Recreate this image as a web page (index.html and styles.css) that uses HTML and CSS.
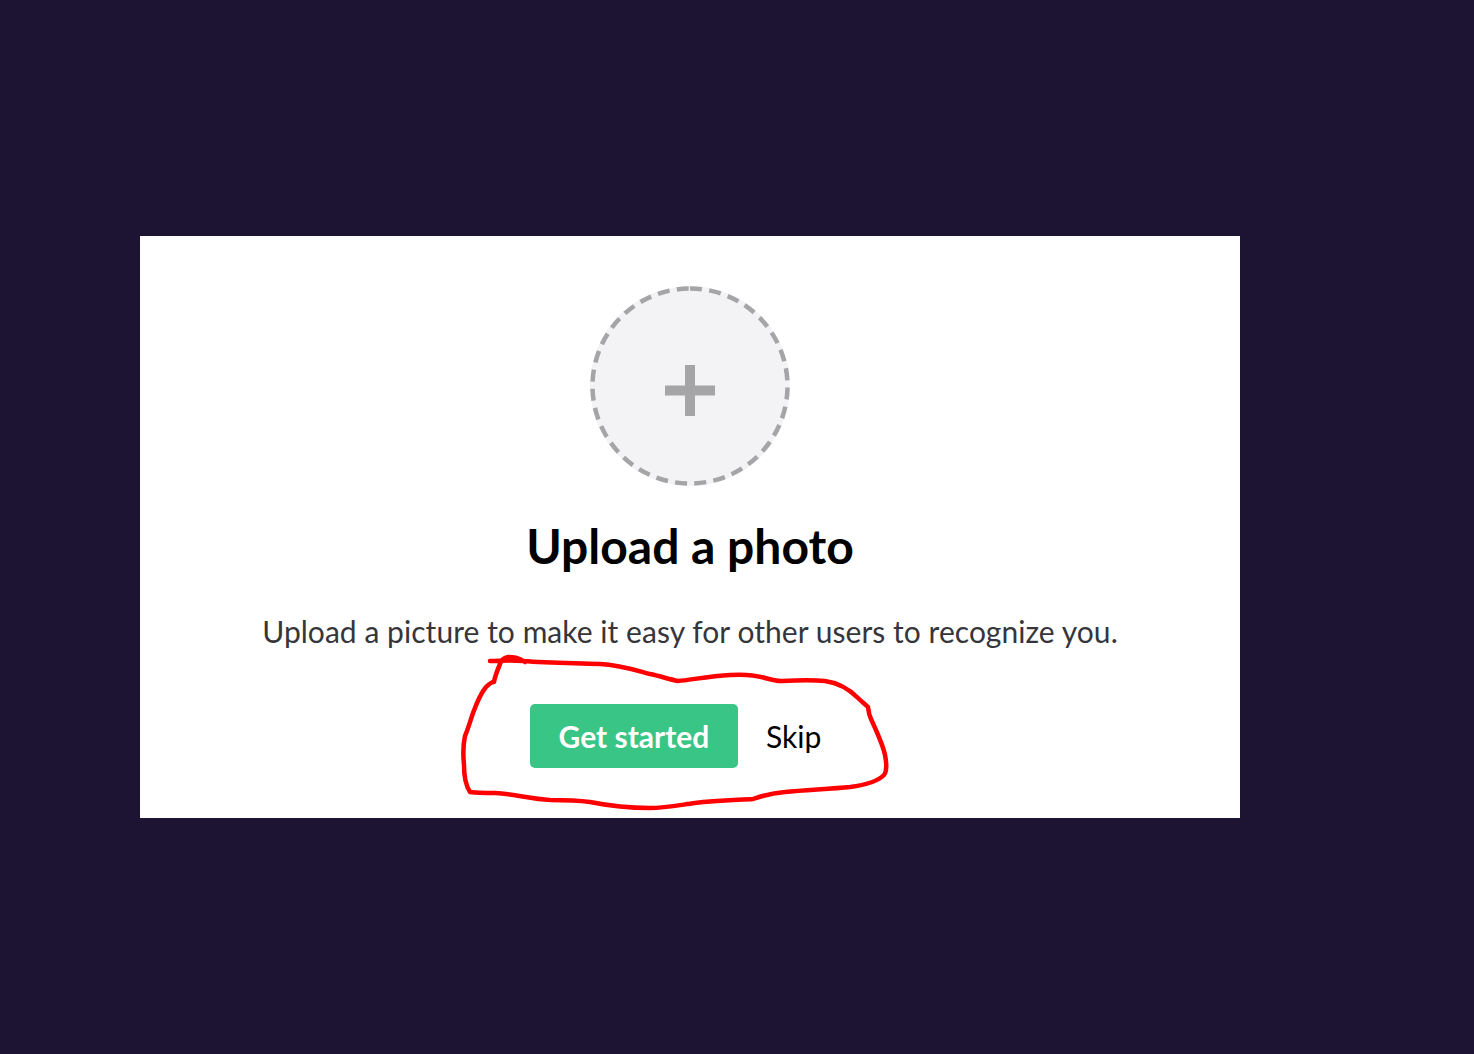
FILE: index.html
```html
<!DOCTYPE html>
<html lang="en">
<head>
<meta charset="utf-8">
<title>Upload a photo</title>
<link rel="stylesheet" href="styles.css">
</head>
<body>
<main class="card">
  <button class="avatar" type="button" aria-label="Add photo">
    <svg class="avatar-art" viewBox="0 0 200 200" width="200" height="200" aria-hidden="true">
      <circle cx="100" cy="100" r="100" fill="#f3f3f5"/>
      <circle cx="100" cy="100" r="97.500" fill="none" stroke="#a5a5a8" stroke-width="4.500" stroke-dasharray="12 7.300" transform="rotate(-90 100 100)"/>
      <path d="M95 79h10v20.500h20v10h-20v20.500h-10v-20.500h-20v-10h20z" fill="#a5a5a8"/>
    </svg>
  </button>
  <h1 class="title">Upload a photo</h1>
  <p class="lead">Upload a picture to make it easy for other users to recognize you.</p>
  <div class="actions">
    <button class="primary" type="button">Get started</button>
    <a class="skip" href="#">Skip</a>
  </div>
</main>
<svg class="scribble" viewBox="0 0 1474 1054" width="1474" height="1054" aria-hidden="true">
  <path d="M490 661C500 661 508 660 523 661C550 663 575 663 600 664C620 665 635 670 650 674C660 676 668 679 678 681C690 680 710 676 730 675C745 674 755 675 765 678C772 680 776 681 782 681C800 680 815 680 825 681C840 683 850 690 858 698C862 702 866 705 868 707C869 711 868 713 871 719C877 732 883 745 885 755C887 765 887 771 884 775C878 781 865 785 850 787C830 789 805 790 785 792C770 793 762 796 753 799C735 800 715 800 695 803C680 805 665 808 650 808C630 808 610 806 590 802C575 800 565 800 550 800C530 799 515 794 495 793C485 793 478 793 470 792C466 786 464 775 464 765C463 755 463 745 465 736C468 729 470 722 473 713C477 702 481 693 486 687C490 683 492 682 494 682C495 676 497 671 500 664C501 660 503 658 508 657C513 657 518 657 525 662" fill="none" stroke="#fe0000" stroke-width="4.500" stroke-linecap="round" stroke-linejoin="round"/>
</svg>
</body>
</html>
```
FILE: styles.css
```css
html, body {
  margin: 0;
  height: 100%;
}

body {
  background: #1d1433;
  font-family: Lato, "Liberation Sans", sans-serif;
  overflow: hidden;
  padding: 236px 0 0 140px;
  box-sizing: border-box;
}

.card {
  width: 1100px;
  height: 582px;
  background: #fff;
  display: flex;
  flex-direction: column;
  align-items: center;
  padding-top: 50px;
  box-sizing: border-box;
}

.avatar {
  width: 200px;
  height: 200px;
  padding: 0;
  border: 0;
  background: none;
  display: block;
}

.avatar-art {
  display: block;
}

.title {
  margin: 30px 0 0;
  font-size: 48px;
  line-height: 60px;
  font-weight: 700;
  color: #000;
}

.lead {
  margin: 33px 0 0;
  font-size: 30px;
  line-height: 44px;
  letter-spacing: 0.045px;
  color: #36363a;
}

.actions {
  display: flex;
  align-items: center;
  margin-top: 51px;
}

.primary {
  width: 208px;
  height: 64px;
  padding: 0;
  border: 0;
  border-radius: 5px;
  background: #38c585;
  color: #fff;
  font: 700 30px Lato, "Liberation Sans", sans-serif;
}

.skip {
  width: 112px;
  box-sizing: border-box;
  padding-left: 28px;
  font-size: 30px;
  line-height: 64px;
  color: #000;
  text-decoration: none;
}

.scribble {
  position: absolute;
  top: 0;
  left: 0;
  pointer-events: none;
}
```
